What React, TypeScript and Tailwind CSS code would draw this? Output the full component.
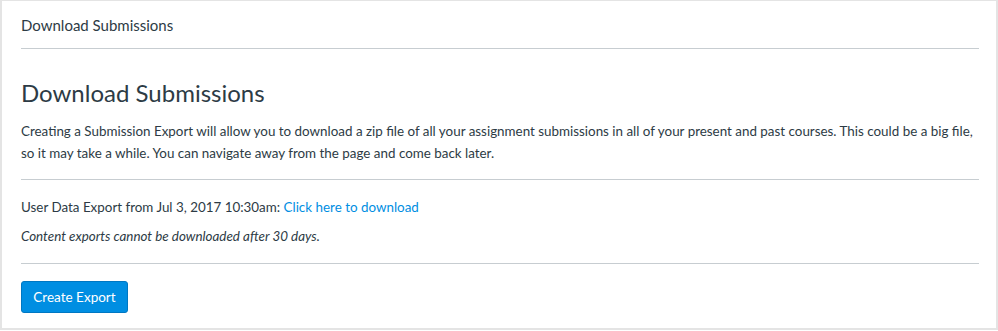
export default function App() {
  return (
    <div className="w-[998px] h-[331px] bg-white font-['Lato',sans-serif] text-[#2d3b45]">
      <div className="h-[330px] border-x-2 border-b-2 border-t border-[#e4e4e4] pl-[19px] pr-[17px]">
        {/* Breadcrumb header */}
        <div className="h-[48px] border-b border-[#c7cdd1] flex items-center text-[15px] pt-px">
          Download Submissions
        </div>

        <h1 className="text-[24px] leading-[30px] mt-[29px] mb-[12px]">Download Submissions</h1>
        <p className="text-[13.4px] leading-[22px] -mr-[6px]">
          Creating a Submission Export will allow you to download a zip file of all your assignment submissions in all of
          your present and past courses. This could be a big file, so it may take a while. You can navigate away from the
          page and come back later.
        </p>

        <div className="border-t border-[#c7cdd1] mt-[15px] pt-[16px] text-[13.4px] leading-[22px]">
          <p>
            User Data Export from Jul 3, 2017 10:30am:{" "}
            <a href="#" className="text-[#008ee2]">
              Click here to download
            </a>
          </p>
          <p className="italic mt-[7px]">Content exports cannot be downloaded after 30 days.</p>
        </div>

        <div className="border-t border-[#c7cdd1] mt-[16px] pt-[17px]">
          <button className="h-[32px] w-[107px] rounded-[3px] bg-[#008ee2] border border-[#0077c2] text-white text-[13.5px]">
            Create Export
          </button>
        </div>
      </div>
    </div>
  );
}
